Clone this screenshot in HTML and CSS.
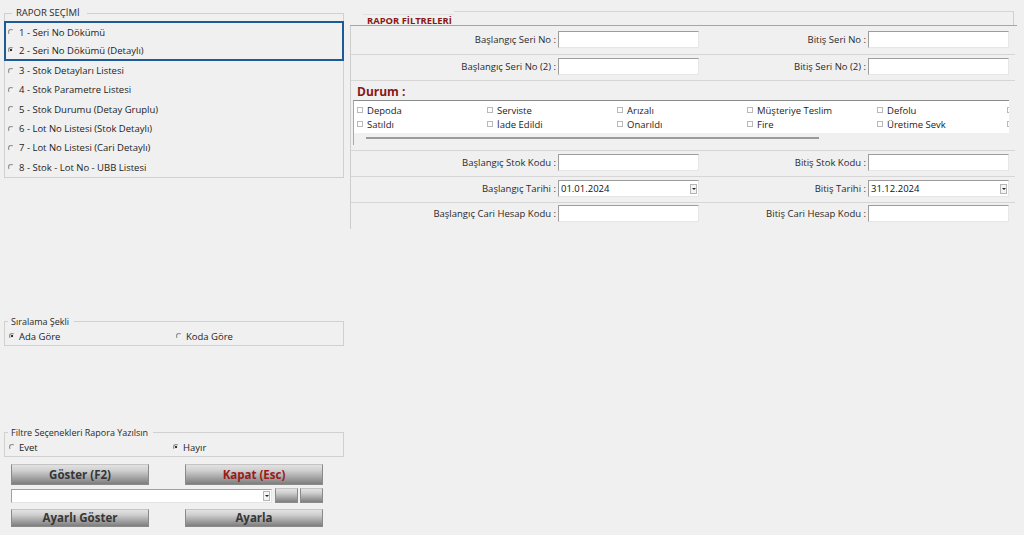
FILE: index.html
```html
<!DOCTYPE html>
<html lang="tr">
<head>
<meta charset="utf-8">
<title>Rapor</title>
<link rel="stylesheet" href="styles.css">
</head>
<body>
<div class="app">
  <div class="left">
    <fieldset class="group report-select">
      <legend>RAPOR SEÇİMİ</legend>
      <div class="focus">
        <label class="opt"><span class="radio"></span>1 - Seri No Dökümü</label>
        <label class="opt"><span class="radio on"></span>2 - Seri No Dökümü (Detaylı)</label>
      </div>
      <label class="opt"><span class="radio"></span>3 - Stok Detayları Listesi</label>
      <label class="opt"><span class="radio"></span>4 - Stok Parametre Listesi</label>
      <label class="opt"><span class="radio"></span>5 - Stok Durumu (Detay Gruplu)</label>
      <label class="opt"><span class="radio"></span>6 - Lot No Listesi (Stok Detaylı)</label>
      <label class="opt"><span class="radio"></span>7 - Lot No Listesi (Cari Detaylı)</label>
      <label class="opt"><span class="radio"></span>8 - Stok - Lot No - UBB Listesi</label>
    </fieldset>

    <fieldset class="group sort">
      <legend>Sıralama Şekli</legend>
      <div class="pair">
        <label class="opt2"><span class="radio on"></span>Ada Göre</label>
        <label class="opt2"><span class="radio"></span>Koda Göre</label>
      </div>
    </fieldset>

    <fieldset class="group print">
      <legend>Filtre Seçenekleri Rapora Yazılsın</legend>
      <div class="pair pair-b">
        <label class="opt2"><span class="radio"></span>Evet</label>
        <label class="opt2"><span class="radio on"></span>Hayır</label>
      </div>
    </fieldset>

    <div class="actions">
      <button class="btn">Göster (F2)</button>
      <button class="btn red">Kapat (Esc)</button>
      <div class="combo-row">
        <div class="combo"><span class="dd"></span></div>
        <button class="btn mini"></button>
        <button class="btn mini"></button>
      </div>
      <button class="btn small">Ayarlı Göster</button>
      <button class="btn small">Ayarla</button>
    </div>
  </div>

  <div class="right">
    <div class="tabbar">
      <span class="tab">RAPOR FİLTRELERİ</span>
      <span class="tabfill"></span>
    </div>
    <div class="panel">
      <div class="row first">
        <span class="lbl">Başlangıç Seri No :</span><span class="inp"></span>
        <span class="lbl">Bitiş Seri No :</span><span class="inp"></span>
      </div>
      <div class="row">
        <span class="lbl">Başlangıç Seri No (2) :</span><span class="inp"></span>
        <span class="lbl">Bitiş Seri No (2) :</span><span class="inp"></span>
      </div>
      <div class="durum">
        <div class="durum-title">Durum :</div>
        <div class="durum-box">
          <div class="checks">
            <span class="chk"><span class="cb"></span>Depoda</span>
            <span class="chk"><span class="cb"></span>Serviste</span>
            <span class="chk"><span class="cb"></span>Arızalı</span>
            <span class="chk"><span class="cb"></span>Müşteriye Teslim</span>
            <span class="chk"><span class="cb"></span>Defolu</span>
            <span class="chk"><span class="cb"></span></span>
            <span class="chk"><span class="cb"></span>Satıldı</span>
            <span class="chk"><span class="cb"></span>İade Edildi</span>
            <span class="chk"><span class="cb"></span>Onarıldı</span>
            <span class="chk"><span class="cb"></span>Fire</span>
            <span class="chk"><span class="cb"></span>Üretime Sevk</span>
            <span class="chk"><span class="cb"></span></span>
          </div>
          <div class="track"><span class="thumb"></span></div>
        </div>
      </div>
      <div class="row">
        <span class="lbl">Başlangıç Stok Kodu :</span><span class="inp"></span>
        <span class="lbl">Bitiş Stok Kodu :</span><span class="inp"></span>
      </div>
      <div class="row">
        <span class="lbl">Başlangıç Tarihi :</span><span class="inp date"><span class="val">01.01.2024</span><span class="dd"></span></span>
        <span class="lbl">Bitiş Tarihi :</span><span class="inp date"><span class="val">31.12.2024</span><span class="dd"></span></span>
      </div>
      <div class="row last">
        <span class="lbl">Başlangıç Cari Hesap Kodu :</span><span class="inp"></span>
        <span class="lbl">Bitiş Cari Hesap Kodu :</span><span class="inp"></span>
      </div>
    </div>
  </div>
</div>
</body>
</html>
```

FILE: styles.css
```css
* { box-sizing: border-box; }

html, body {
  margin: 0;
  padding: 0;
}

body {
  width: 1024px;
  height: 535px;
  overflow: hidden;
  background: #f0f0f0;
  font-family: "Open Sans", "Noto Sans", sans-serif;
  color: #1c1c1c;
}

.app {
  display: flex;
  align-items: flex-start;
}

/* ---------- left column ---------- */
.left {
  width: 344px;
  padding: 7px 0 0 4px;
  display: flex;
  flex-direction: column;
}

.group {
  margin: 0;
  padding: 0;
  border: 1px solid #d0d0d0;
  min-width: 0;
}

.group legend {
  margin-left: 3px;
  padding: 0 5px 0 3px;
  font-size: 9px;
  line-height: 12px;
  color: #2a2a2a;
}

.report-select {
  padding-top: 2px;
}

.report-select legend {
  margin-left: 7px;
  padding: 0 7px 0 4px;
  font-size: 9.5px;
}

.focus {
  margin: 0 -1px;
  border: 2px solid #1f5a98;
}

.opt {
  display: flex;
  align-items: center;
  height: 19.3px;
  padding-left: 3px;
  font-size: 9.5px;
  color: #1c1c1c;
}

.focus .opt {
  height: 18px;
  padding-left: 2px;
}

.radio {
  display: inline-block;
  flex: none;
  width: 6px;
  height: 6px;
  margin-right: 5px;
  border: 1px solid;
  border-color: #8c8c8c #f4f4f4 #f4f4f4 #8c8c8c;
  border-radius: 50%;
  background: #f0f0f0;
}

.radio.on {
  background: radial-gradient(circle, #333 0 1.3px, #f0f0f0 1.6px);
}

.sort {
  margin-top: 138px;
}

.print {
  margin-top: 81px;
}

.pair {
  display: grid;
  grid-template-columns: 167px 1fr;
  height: 17px;
  padding-left: 4px;
  align-items: center;
}

.pair-b {
  grid-template-columns: 164px 1fr;
}

.opt2 {
  display: flex;
  align-items: center;
  font-size: 9.5px;
  color: #1c1c1c;
}

.opt2 .radio {
  margin-right: 4px;
}

/* buttons */
.actions {
  margin-top: 7px;
  padding-left: 7px;
  display: grid;
  grid-template-columns: 138px 138px;
  column-gap: 36px;
}

.btn {
  height: 21px;
  padding: 0;
  border: 1px solid #8a8a8a;
  border-top-color: #c4c4c4;
  background: linear-gradient(#e2e2e2 0%, #cfcfcf 30%, #a0a0a0 70%, #7e7e7e 100%);
  font-family: "Open Sans", "Noto Sans", sans-serif;
  font-weight: 700;
  font-size: 11.5px;
  color: #363636;
}

.btn.red {
  color: #9a1a1a;
}

.btn.small {
  height: 18px;
  margin-top: 6px;
}

.combo-row {
  grid-column: 1 / -1;
  display: flex;
  align-items: flex-start;
  margin-top: 3px;
}

.combo {
  width: 261px;
  height: 14px;
  margin-top: 1px;
  background: #fff;
  border: 1px solid;
  border-color: #a0a0a0 #e4e4e4 #e4e4e4 #a0a0a0;
  display: flex;
  justify-content: flex-end;
  align-items: center;
  padding-right: 1px;
}

.btn.mini {
  width: 23px;
  height: 15px;
  margin-left: 2px;
}

.combo-row .combo + .btn.mini {
  margin-left: 3px;
}

.dd {
  position: relative;
  width: 7px;
  height: 10px;
  border: 1px solid #b5b5b5;
  background: #f4f4f4;
  flex: none;
}

.dd::after {
  content: "";
  position: absolute;
  left: 1px;
  top: 3px;
  border-left: 2px solid transparent;
  border-right: 2px solid transparent;
  border-top: 2px solid #222;
}

/* ---------- right column ---------- */
.right {
  width: 667px;
  margin-left: 6px;
  padding-top: 11px;
}

.tabbar {
  display: flex;
  height: 15px;
  border-bottom: 1px solid #a6a6a6;
}

.tab {
  margin-left: 13px;
  margin-top: 3px;
  padding: 0 2px 0 4px;
  border-top: 1px solid #e2e2e2;
  font-size: 9.4px;
  font-weight: 700;
  line-height: 11px;
  color: #8a1616;
}

.tabfill {
  flex: 1;
  margin-right: 3px;
  border-top: 1px solid #d6d6d6;
  border-right: 1px solid #cfcfcf;
}

.panel {
  width: 665px;
  border-left: 1px solid #cdcdcd;
}

.row {
  display: grid;
  grid-template-columns: 207px 141px 169px 141px;
  align-items: start;
  height: 26px;
  padding-top: 3px;
  border-bottom: 1px solid #d6d6d6;
}

.row.first {
  height: 29px;
  padding-top: 5px;
}

.row.last {
  border-bottom: none;
  padding-top: 2px;
}

.lbl {
  text-align: right;
  padding-right: 2px;
  font-size: 9.5px;
  line-height: 17px;
  color: #2a2a2a;
  white-space: nowrap;
}

.inp {
  height: 17px;
  background: #fff;
  border: 1px solid;
  border-color: #9d9d9d #e6e6e6 #e6e6e6 #9d9d9d;
}

.inp.date {
  display: flex;
  align-items: center;
  padding: 0 1px 0 2px;
}

.val {
  flex: 1;
  font-size: 9.5px;
  color: #111;
}

/* durum */
.durum {
  height: 70px;
  padding: 4px 5px 0 2px;
  border-bottom: 1px solid #d6d6d6;
}

.durum-title {
  padding-left: 4px;
  font-size: 12px;
  font-weight: 700;
  line-height: 14px;
  color: #8a1616;
}

.durum-box {
  margin-top: 1px;
  width: 656px;
  border-top: 1px solid #8c8c8c;
  border-left: 1px solid #a8a8a8;
}

.checks {
  display: grid;
  grid-template-columns: repeat(6, 130px);
  grid-auto-rows: 14px;
  height: 32px;
  padding: 2px 0 0 3px;
  background: #fff;
  overflow: hidden;
}

.chk {
  display: flex;
  align-items: center;
  font-size: 9.5px;
  color: #1c1c1c;
  white-space: nowrap;
}

.cb {
  flex: none;
  width: 6px;
  height: 6px;
  margin-right: 4px;
  border: 1px solid #b9b9b9;
  background: #fff;
}

.track {
  height: 12px;
  padding: 4px 0 0 12px;
}

.thumb {
  display: block;
  width: 453px;
  height: 2px;
  background: #9a9a9a;
}
```
